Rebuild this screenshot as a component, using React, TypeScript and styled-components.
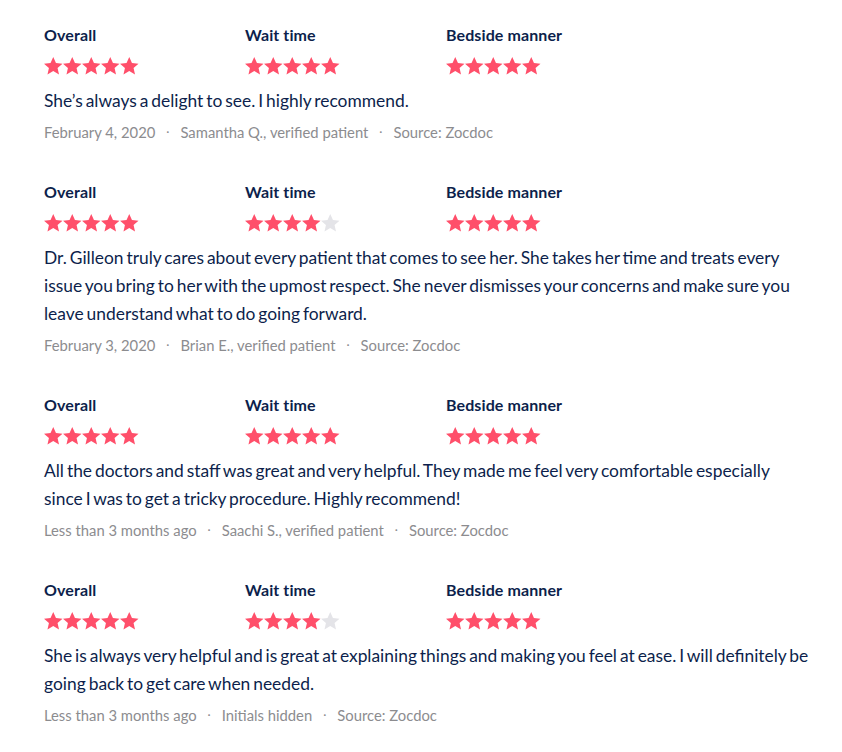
import styled, { createGlobalStyle } from 'styled-components'

const GlobalStyle = createGlobalStyle`
  html, body {
    margin: 0;
    padding: 0;
    background: #ffffff;
  }
  body {
    font-family: Lato, 'Noto Sans', sans-serif;
    -webkit-font-smoothing: antialiased;
  }
`

type Review = {
  overall: number
  wait: number
  bedside: number
  text: string
  date: string
  author: string
}

const reviews: Review[] = [
  {
    overall: 5,
    wait: 5,
    bedside: 5,
    text: 'She’s always a delight to see. I highly recommend.',
    date: 'February 4, 2020',
    author: 'Samantha Q., verified patient',
  },
  {
    overall: 5,
    wait: 4,
    bedside: 5,
    text:
      'Dr. Gilleon truly cares about every patient that comes to see her. She takes her time and treats every issue you bring to her with the upmost respect. She never dismisses your concerns and make sure you leave understand what to do going forward.',
    date: 'February 3, 2020',
    author: 'Brian E., verified patient',
  },
  {
    overall: 5,
    wait: 5,
    bedside: 5,
    text:
      'All the doctors and staff was great and very helpful. They made me feel very comfortable especially since I was to get a tricky procedure. Highly recommend!',
    date: 'Less than 3 months ago',
    author: 'Saachi S., verified patient',
  },
  {
    overall: 5,
    wait: 4,
    bedside: 5,
    text:
      'She is always very helpful and is great at explaining things and making you feel at ease. I will definitely be going back to get care when needed.',
    date: 'Less than 3 months ago',
    author: 'Initials hidden',
  },
]

const List = styled.section`
  padding: 25px 31px 20px 44px;
  display: flex;
  flex-direction: column;
  gap: 40px;
`

const Item = styled.article`
  display: flex;
  flex-direction: column;
`

const Ratings = styled.div`
  display: grid;
  grid-template-columns: 201px 201px 201px;
`

const Rating = styled.div`
  display: flex;
  flex-direction: column;
  gap: 12px;
`

const Label = styled.div`
  font-size: 16px;
  line-height: 20px;
  font-weight: 700;
  color: #0d1f4c;
  letter-spacing: 0.1px;
`

const Stars = styled.div`
  display: flex;
  align-items: center;
  gap: 0.6px;
  height: 18px;
`

const Body = styled.p`
  margin: 12px 0 0;
  font-size: 17.4px;
  line-height: 28px;
  word-spacing: -1.5px;
  color: #0d1f4c;
`

const Meta = styled.div`
  margin-top: 7px;
  display: flex;
  align-items: center;
  font-size: 14.8px;
  line-height: 20px;
  color: #8c8c8f;
`

const Dot = styled.span`
  margin: 0 11px 0 11px;
  font-size: 12px;
`

const Star = ({ filled }: { filled: boolean }) => (
  <svg width="18.5" height="17.6" viewBox="1.5 1.5 21 20">
    <path
      d="M12 1.5l3.09 6.9 7.41.68-5.6 4.95 1.66 7.37L12 17.5l-6.56 3.9 1.66-7.37-5.6-4.95 7.41-.68z"
      fill={filled ? '#ff4f6a' : '#e4e4e8'}
    />
  </svg>
)

const StarRow = ({ value }: { value: number }) => (
  <Stars>
    {[0, 1, 2, 3, 4].map(i => (
      <Star key={i} filled={i < value} />
    ))}
  </Stars>
)

const App = () => (
  <>
    <GlobalStyle />
    <List>
      {reviews.map((r, i) => (
        <Item key={i}>
          <Ratings>
            <Rating>
              <Label>Overall</Label>
              <StarRow value={r.overall} />
            </Rating>
            <Rating>
              <Label>Wait time</Label>
              <StarRow value={r.wait} />
            </Rating>
            <Rating>
              <Label>Bedside manner</Label>
              <StarRow value={r.bedside} />
            </Rating>
          </Ratings>
          <Body>{r.text}</Body>
          <Meta>
            <span>{r.date}</span>
            <Dot>·</Dot>
            <span>{r.author}</span>
            <Dot>·</Dot>
            <span>Source: Zocdoc</span>
          </Meta>
        </Item>
      ))}
    </List>
  </>
)

export default App
